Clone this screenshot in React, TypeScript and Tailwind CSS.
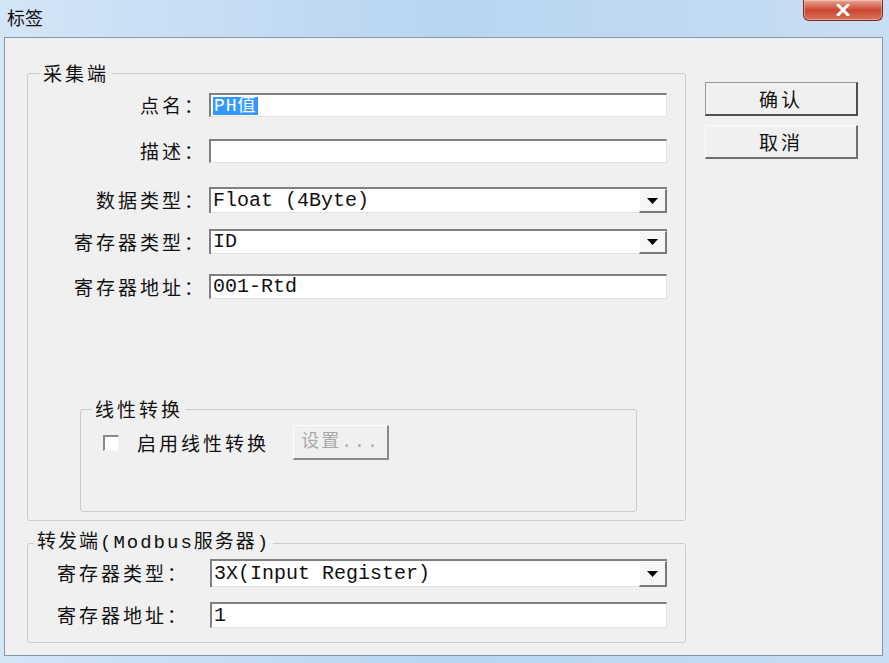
import React from "react";

const cjk = "font-['Noto_Sans_CJK_SC',sans-serif]";
const mono = "font-['Liberation_Mono','Noto_Sans_CJK_SC',monospace]";

function TextBox({ className, children }: { className: string; children?: React.ReactNode }) {
  return (
    <div
      className={`flex items-center bg-white border-t-2 border-l-2 border-r border-b border-t-[#808080] border-l-[#808080] border-r-[#e2e2e2] border-b-[#e2e2e2] pl-[2px] text-[20px] leading-[22px] text-[#111] ${mono} ${className}`}
    >
      {children}
    </div>
  );
}

function Combo({ className, value }: { className: string; value: string }) {
  return (
    <div className={`flex items-stretch bg-white border-t-2 border-l-2 border-[#808080] ${className}`}>
      <div className={`flex-1 flex items-center pl-[2px] border-b border-b-[#e2e2e2] text-[20px] leading-[22px] text-[#111] ${mono}`}>
        {value}
      </div>
      <div className="w-[28px] flex items-center justify-center bg-[#f6f6f6] border-t border-l border-t-white border-l-white border-r-2 border-b-2 border-r-[#7a7a7a] border-b-[#7a7a7a]">
        <svg width="11" height="6" viewBox="0 0 11 6">
          <polygon points="0,0 11,0 5.5,6" fill="#000" />
        </svg>
      </div>
    </div>
  );
}

function Row({ label, children, className }: { label: string; children: React.ReactNode; className: string }) {
  return (
    <div className={`flex items-center ${className}`}>
      <div className={`w-[178px] text-right text-[19px] leading-[22px] tracking-[3px] text-[#111] ${cjk}`}>{label}</div>
      <div className="ml-[3px]">{children}</div>
    </div>
  );
}

export default function App() {
  return (
    <div className="w-[889px] h-[663px] overflow-hidden flex flex-col bg-gradient-to-r from-[#d4e5f6] via-[#b8d5f2] to-[#c8def3]">
      {/* title bar */}
      <div className="relative h-[37px] shrink-0">
        <div className={`absolute left-[7px] top-[6px] text-[18px] leading-[22px] text-[#111] ${cjk}`}>标签</div>
        <div className="absolute left-[803px] top-0 w-[80px] h-[21px] rounded-b-[6px] border border-t-0 border-[#7d2a1d] bg-gradient-to-b from-[#e9a596] via-[#c9462f] to-[#d9735b] flex items-center justify-center shadow-[inset_0_0_0_1px_rgba(255,255,255,0.35)]">
          <svg width="14" height="12" viewBox="0 0 14 12">
            <path d="M2 1 L12 11 M12 1 L2 11" stroke="#fff" strokeWidth="3" strokeLinecap="round" />
          </svg>
        </div>
      </div>

      {/* client area */}
      <div className="ml-[4px] mr-[6px] h-[619px] border border-[#8797ab] bg-[#f0f0f0] flex">
        <div className="pl-[22px] flex flex-col">
          {/* 采集端 */}
          <fieldset className="mt-[24px] w-[659px] border border-[#cbcbcb] rounded-[3px]">
            <legend className={`ml-[12px] px-[3px] text-[19px] leading-[22px] tracking-[3px] text-[#111] ${cjk}`}>采集端</legend>
            <Row label="点名：" className="mt-[9px]">
              <TextBox className="w-[458px] h-[24px]">
                <span className="bg-[#3399ff] text-white text-[18px] leading-[18px] tracking-[1px] px-[1px]">PH值</span>
              </TextBox>
            </Row>
            <Row label="描述：" className="mt-[22px]">
              <TextBox className="w-[458px] h-[24px]" />
            </Row>
            <Row label="数据类型：" className="mt-[24px]">
              <Combo className="w-[458px] h-[26px]" value="Float (4Byte)" />
            </Row>
            <Row label="寄存器类型：" className="mt-[16px]">
              <Combo className="w-[458px] h-[25px]" value="ID" />
            </Row>
            <Row label="寄存器地址：" className="mt-[20px]">
              <TextBox className="w-[458px] h-[25px]">001-Rtd</TextBox>
            </Row>

            {/* 线性转换 */}
            <fieldset className="mt-[99px] mb-[8px] ml-[52px] w-[557px] border border-[#cbcbcb] rounded-[3px] pb-[51px]">
              <legend className={`ml-[11px] px-[3px] text-[19px] leading-[22px] tracking-[3px] text-[#111] ${cjk}`}>线性转换</legend>
              <div className="mt-[5px] flex items-center">
                <div className="ml-[22px] w-[16px] h-[16px] bg-white border-t-2 border-l-2 border-r border-b border-t-[#8a8a8a] border-l-[#8a8a8a] border-r-[#f4f4f4] border-b-[#f4f4f4]" />
                <div className={`ml-[18px] text-[19px] leading-[22px] tracking-[3px] text-[#111] ${cjk}`}>启用线性转换</div>
                <div className={`ml-[24px] w-[96px] h-[35px] flex items-center justify-center bg-[#f0f0f0] border-t border-l border-t-[#fdfdfd] border-l-[#fdfdfd] border-r-2 border-b-2 border-r-[#8a8a8a] border-b-[#8a8a8a] text-[18px] leading-[22px] tracking-[2px] text-[#a8a8a8] ${mono}`}>
                  设置...
                </div>
              </div>
            </fieldset>
          </fieldset>

          {/* 转发端 */}
          <fieldset className="mt-[11px] w-[659px] border border-[#cbcbcb] rounded-[3px] pb-[14px]">
            <legend className={`ml-[6px] px-[3px] text-[19px] leading-[22px] tracking-[2px] text-[#111] ${mono}`}>转发端(Modbus服务器)</legend>
            <div className="mt-[5px] flex items-center">
              <div className={`w-[182px] pl-[29px] text-[19px] leading-[22px] tracking-[3px] text-[#111] ${cjk}`}>寄存器类型：</div>
              <Combo className="w-[457px] h-[28px]" value="3X(Input Register)" />
            </div>
            <div className="mt-[15px] flex items-center">
              <div className={`w-[182px] pl-[29px] text-[19px] leading-[22px] tracking-[3px] text-[#111] ${cjk}`}>寄存器地址：</div>
              <TextBox className="w-[457px] h-[26px]">1</TextBox>
            </div>
          </fieldset>
        </div>

        {/* buttons */}
        <div className="ml-[19px] mt-[44px] flex flex-col gap-[9px]">
          <div className={`w-[153px] h-[34px] flex items-center justify-center bg-[#f0f0f0] border border-[#9a9a9a] border-r-2 border-b-2 border-r-[#4f4f4f] border-b-[#4f4f4f] text-[19px] leading-[22px] tracking-[3px] text-[#111] ${cjk}`}>
            确认
          </div>
          <div className={`w-[153px] h-[34px] flex items-center justify-center bg-[#f0f0f0] border-t border-l border-t-[#fafafa] border-l-[#fafafa] border-r-2 border-b-2 border-r-[#6f6f6f] border-b-[#6f6f6f] text-[19px] leading-[22px] tracking-[3px] text-[#111] ${cjk}`}>
            取消
          </div>
        </div>
      </div>
    </div>
  );
}
